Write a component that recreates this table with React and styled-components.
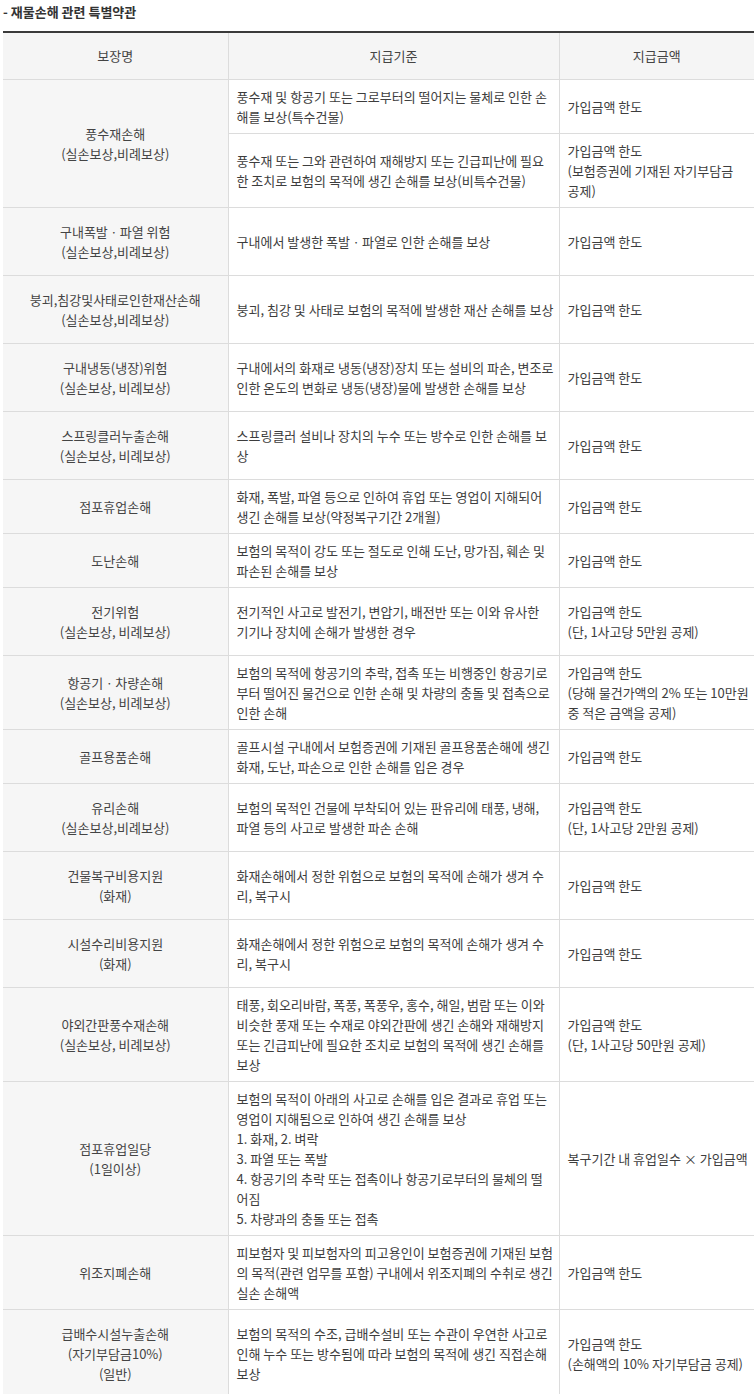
import React from "react";
import styled, { createGlobalStyle } from "styled-components";

const Global = createGlobalStyle`
  html, body { margin: 0; padding: 0; background: #fff; overflow-x: hidden; }
  body { font-family: "Noto Sans CJK KR", "Noto Sans", sans-serif; color: #333; }
`;

const Page = styled.div`
  padding: 2px 0 0 3px;
  overflow: hidden;
`;

const Title = styled.h3`
  margin: 0 0 9px;
  font-size: 13px;
  line-height: 20px;
  font-weight: 700;
  color: #333;
`;

const Table = styled.table`
  width: 751px;
  table-layout: fixed;
  border-collapse: collapse;
  border-top: 2px solid #3a3a3a;
  font-size: 13px;
  line-height: 20px;
  color: #3d3d3d;
`;

const Th = styled.th`
  background: #f5f5f5;
  border: 1px solid #dcdcdc;
  border-top: none;
  padding: 13px 8px;
  font-weight: 400;
  color: #444;
  text-align: center;
  &:first-child { border-left: none; }
  &:last-child { border-right: none; }
`;

const NameCell = styled.td`
  background: #f6f6f6;
  border: 1px solid #dcdcdc;
  border-left: none;
  padding: 13.5px 8px;
  text-align: center;
  vertical-align: middle;
  color: #444;
`;

const Cell = styled.td`
  border: 1px solid #dcdcdc;
  padding: 6.5px 2px 6.5px 8px;
  text-align: left;
  vertical-align: middle;
  white-space: nowrap;
  overflow: hidden;
  ${(p) => p.$last && "border-right: none;"}
`;

const Lines = ({ children }) =>
  children.split("\n").map((l, i, a) => (
    <React.Fragment key={i}>
      {l}
      {i < a.length - 1 && <br />}
    </React.Fragment>
  ));

const rows = [
  {
    name: "풍수재손해\n(실손보상,비례보상)",
    subs: [
      ["풍수재 및 항공기 또는 그로부터의 떨어지는 물체로 인한 손\n해를 보상(특수건물)", "가입금액 한도"],
      ["풍수재 또는 그와 관련하여 재해방지 또는 긴급피난에 필요\n한 조치로 보험의 목적에 생긴 손해를 보상(비특수건물)", "가입금액 한도\n(보험증권에 기재된 자기부담금\n공제)"],
    ],
  },
  { name: "구내폭발ㆍ파열 위험\n(실손보상,비례보상)", subs: [["구내에서 발생한 폭발ㆍ파열로 인한 손해를 보상", "가입금액 한도"]] },
  { name: "붕괴,침강및사태로인한재산손해\n(실손보상,비례보상)", subs: [["붕괴, 침강 및 사태로 보험의 목적에 발생한 재산 손해를 보상", "가입금액 한도"]] },
  { name: "구내냉동(냉장)위험\n(실손보상, 비례보상)", subs: [["구내에서의 화재로 냉동(냉장)장치 또는 설비의 파손, 변조로\n인한 온도의 변화로 냉동(냉장)물에 발생한 손해를 보상", "가입금액 한도"]] },
  { name: "스프링클러누출손해\n(실손보상, 비례보상)", subs: [["스프링클러 설비나 장치의 누수 또는 방수로 인한 손해를 보\n상", "가입금액 한도"]] },
  { name: "점포휴업손해", subs: [["화재, 폭발, 파열 등으로 인하여 휴업 또는 영업이 지해되어\n생긴 손해를 보상(약정복구기간 2개월)", "가입금액 한도"]] },
  { name: "도난손해", subs: [["보험의 목적이 강도 또는 절도로 인해 도난, 망가짐, 훼손 및\n파손된 손해를 보상", "가입금액 한도"]] },
  { name: "전기위험\n(실손보상, 비례보상)", subs: [["전기적인 사고로 발전기, 변압기, 배전반 또는 이와 유사한\n기기나 장치에 손해가 발생한 경우", "가입금액 한도\n(단, 1사고당 5만원 공제)"]] },
  { name: "항공기ㆍ차량손해\n(실손보상, 비례보상)", subs: [["보험의 목적에 항공기의 추락, 접촉 또는 비행중인 항공기로\n부터 떨어진 물건으로 인한 손해 및 차량의 충돌 및 접촉으로\n인한 손해", "가입금액 한도\n(당해 물건가액의 2% 또는 10만원\n중 적은 금액을 공제)"]] },
  { name: "골프용품손해", subs: [["골프시설 구내에서 보험증권에 기재된 골프용품손해에 생긴\n화재, 도난, 파손으로 인한 손해를 입은 경우", "가입금액 한도"]] },
  { name: "유리손해\n(실손보상,비례보상)", subs: [["보험의 목적인 건물에 부착되어 있는 판유리에 태풍, 냉해,\n파열 등의 사고로 발생한 파손 손해", "가입금액 한도\n(단, 1사고당 2만원 공제)"]] },
  { name: "건물복구비용지원\n(화재)", subs: [["화재손해에서 정한 위험으로 보험의 목적에 손해가 생겨 수\n리, 복구시", "가입금액 한도"]] },
  { name: "시설수리비용지원\n(화재)", subs: [["화재손해에서 정한 위험으로 보험의 목적에 손해가 생겨 수\n리, 복구시", "가입금액 한도"]] },
  { name: "야외간판풍수재손해\n(실손보상, 비례보상)", subs: [["태풍, 회오리바람, 폭풍, 폭풍우, 홍수, 해일, 범람 또는 이와\n비슷한 풍재 또는 수재로 야외간판에 생긴 손해와 재해방지\n또는 긴급피난에 필요한 조치로 보험의 목적에 생긴 손해를\n보상", "가입금액 한도\n(단, 1사고당 50만원 공제)"]] },
  { name: "점포휴업일당\n(1일이상)", subs: [["보험의 목적이 아래의 사고로 손해를 입은 결과로 휴업 또는\n영업이 지해됨으로 인하여 생긴 손해를 보상\n1. 화재, 2. 벼락\n3. 파열 또는 폭발\n4. 항공기의 추락 또는 접촉이나 항공기로부터의 물체의 떨\n어짐\n5. 차량과의 충돌 또는 접촉", "복구기간 내 휴업일수 × 가입금액"]] },
  { name: "위조지폐손해", subs: [["피보험자 및 피보험자의 피고용인이 보험증권에 기재된 보험\n의 목적(관련 업무를 포함) 구내에서 위조지폐의 수취로 생긴\n실손 손해액", "가입금액 한도"]] },
  { name: "급배수시설누출손해\n(자기부담금10%)\n(일반)", subs: [["보험의 목적의 수조, 급배수설비 또는 수관이 우연한 사고로\n인해 누수 또는 방수됨에 따라 보험의 목적에 생긴 직접손해\n보상", "가입금액 한도\n(손해액의 10% 자기부담금 공제)"]] },
];

export default function App() {
  return (
    <Page>
      <Global />
      <Title>- 재물손해 관련 특별약관</Title>
      <Table>
        <colgroup>
          <col style={{ width: 225 }} />
          <col style={{ width: 331 }} />
          <col style={{ width: 195 }} />
        </colgroup>
        <thead>
          <tr>
            <Th>보장명</Th>
            <Th>지급기준</Th>
            <Th>지급금액</Th>
          </tr>
        </thead>
        <tbody>
          {rows.map((r, ri) =>
            r.subs.map((s, si) => (
              <tr key={`${ri}-${si}`}>
                {si === 0 && (
                  <NameCell rowSpan={r.subs.length}>
                    <Lines>{r.name}</Lines>
                  </NameCell>
                )}
                <Cell>
                  <Lines>{s[0]}</Lines>
                </Cell>
                <Cell $last>
                  <Lines>{s[1]}</Lines>
                </Cell>
              </tr>
            ))
          )}
        </tbody>
      </Table>
    </Page>
  );
}
